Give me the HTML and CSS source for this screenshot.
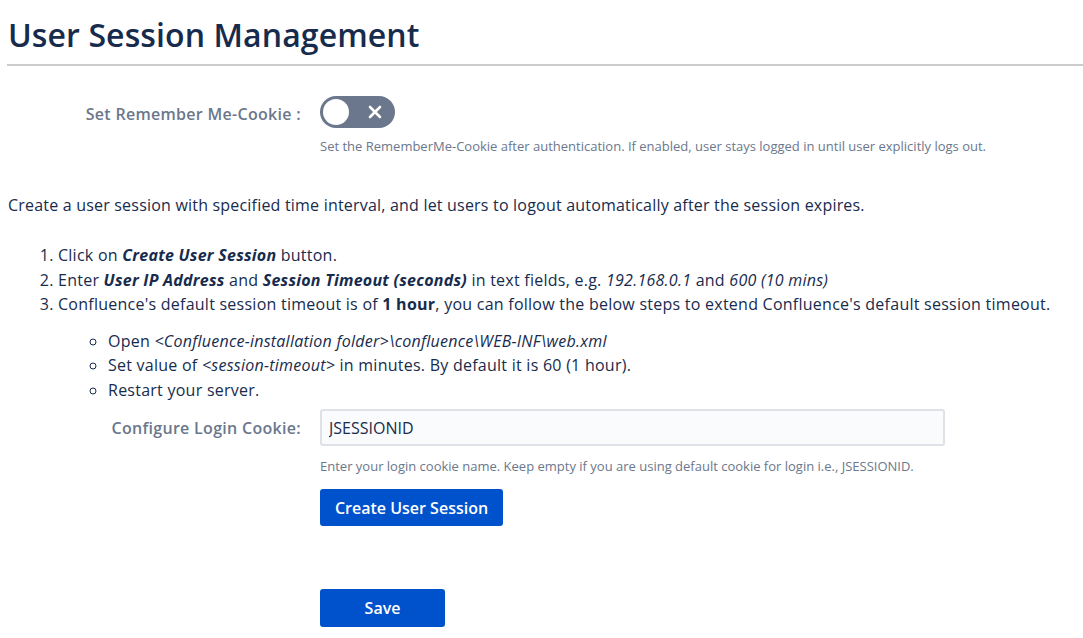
FILE: index.html
```html
<!DOCTYPE html>
<html lang="en">
<head>
    <meta charset="UTF-8">
    <title>User Session Management</title>
    <link rel="stylesheet" href="styles.css">
</head>
<body>
    <div class="page">
        <h1 class="title">User Session Management</h1>
        <hr class="divider">

        <div class="field-row toggle-row">
            <label class="field-label">Set Remember Me-Cookie :</label>
            <div class="field-body">
                <div class="toggle">
                    <span class="toggle-knob"></span>
                    <svg class="toggle-x" width="14" height="14" viewBox="0 0 14 14">
                        <path d="M2 2 L12 12 M12 2 L2 12" stroke="#fff" stroke-width="2.6" stroke-linecap="round"/>
                    </svg>
                </div>
                <div class="help">Set the RememberMe-Cookie after authentication. If enabled, user stays logged in until user explicitly logs out.</div>
            </div>
        </div>

        <p class="intro">Create a user session with specified time interval, and let users to logout automatically after the session expires.</p>

        <ol class="steps">
            <li>Click on <b><i>Create User Session</i></b> button.</li>
            <li>Enter <b><i>User IP Address</i></b> and <b><i>Session Timeout (seconds)</i></b> in text fields, e.g. <i>192.168.0.1</i> and <i>600 (10 mins)</i></li>
            <li>Confluence's default session timeout is of <b>1 hour</b>, you can follow the below steps to extend Confluence's default session timeout.
                <ul class="substeps">
                    <li>Open <i>&lt;Confluence-installation folder&gt;\confluence\WEB-INF\web.xml</i></li>
                    <li>Set value of <i>&lt;session-timeout&gt;</i> in minutes. By default it is 60 (1 hour).</li>
                    <li>Restart your server.</li>
                </ul>
            </li>
        </ol>

        <div class="field-row cookie-row">
            <label class="field-label">Configure Login Cookie:</label>
            <div class="field-body">
                <input class="text-input" type="text" value="JSESSIONID">
                <div class="help">Enter your login cookie name. Keep empty if you are using default cookie for login i.e., JSESSIONID.</div>
                <button class="btn btn-create">Create User Session</button>
            </div>
        </div>

        <div class="field-row save-row">
            <span></span>
            <div class="field-body">
                <button class="btn btn-save">Save</button>
            </div>
        </div>
    </div>
</body>
</html>
```

FILE: styles.css
```css
body {
    margin: 0;
    font-family: 'Open Sans', 'Noto Sans', sans-serif;
    color: #172b4d;
    background: #fff;
}
.page {
    padding: 0 0 0 8px;
}
.title {
    margin: 0;
    padding-top: 14px;
    font-size: 32px;
    font-weight: 600;
    line-height: 42px;
    color: #172b4d;
    letter-spacing: 0.1px;
}
.divider {
    margin: 8px 0 0 -1px;
    border: 0;
    border-top: 2px solid #cccccc;
}
.field-row {
    display: grid;
    grid-template-columns: 293px 1fr;
    column-gap: 19px;
}
.field-label {
    text-align: right;
    font-size: 16px;
    font-weight: 600;
    color: #6b778c;
    letter-spacing: 0.3px;
}
.toggle-row {
    margin-top: 30px;
}
.toggle-row .field-label {
    padding-top: 7px;
}
.toggle {
    position: relative;
    width: 75px;
    height: 32px;
    border-radius: 16px;
    background: #6b778c;
}
.toggle-knob {
    position: absolute;
    left: 3px;
    top: 3px;
    width: 26px;
    height: 26px;
    border-radius: 50%;
    background: #fff;
}
.toggle-x {
    position: absolute;
    left: 48px;
    top: 9px;
}
.help {
    margin-top: 10px;
    font-size: 13px;
    line-height: 17px;
    color: #6b778c;
}
.intro {
    margin: 40px 0 0;
    font-size: 16px;
    line-height: 20px;
    letter-spacing: 0.2px;
}
.steps {
    margin: 28px 0 0;
    padding-left: 50px;
    font-size: 16px;
    line-height: 24.5px;
    letter-spacing: 0.25px;
}
.substeps {
    margin: 12px 0 0;
    padding-left: 50px;
    list-style-type: circle;
}
.cookie-row {
    margin-top: 7px;
}
.cookie-row .field-label {
    padding-top: 8px;
}
.text-input {
    box-sizing: border-box;
    width: 625px;
    height: 37px;
    padding: 0 7px;
    border: 2px solid #dfe1e6;
    border-radius: 3px;
    background: #fafbfc;
    font-family: inherit;
    font-size: 16px;
    color: #172b4d;
}
.cookie-row .help {
    margin-top: 12px;
}
.btn {
    display: block;
    border: 0;
    border-radius: 3px;
    background: #0052cc;
    color: #fff;
    font-family: inherit;
    font-size: 16px;
    font-weight: 600;
}
.btn-create {
    margin-top: 14px;
    width: 183px;
    height: 37px;
}
.save-row {
    margin-top: 63px;
}
.btn-save {
    width: 125px;
    height: 38px;
}
```
